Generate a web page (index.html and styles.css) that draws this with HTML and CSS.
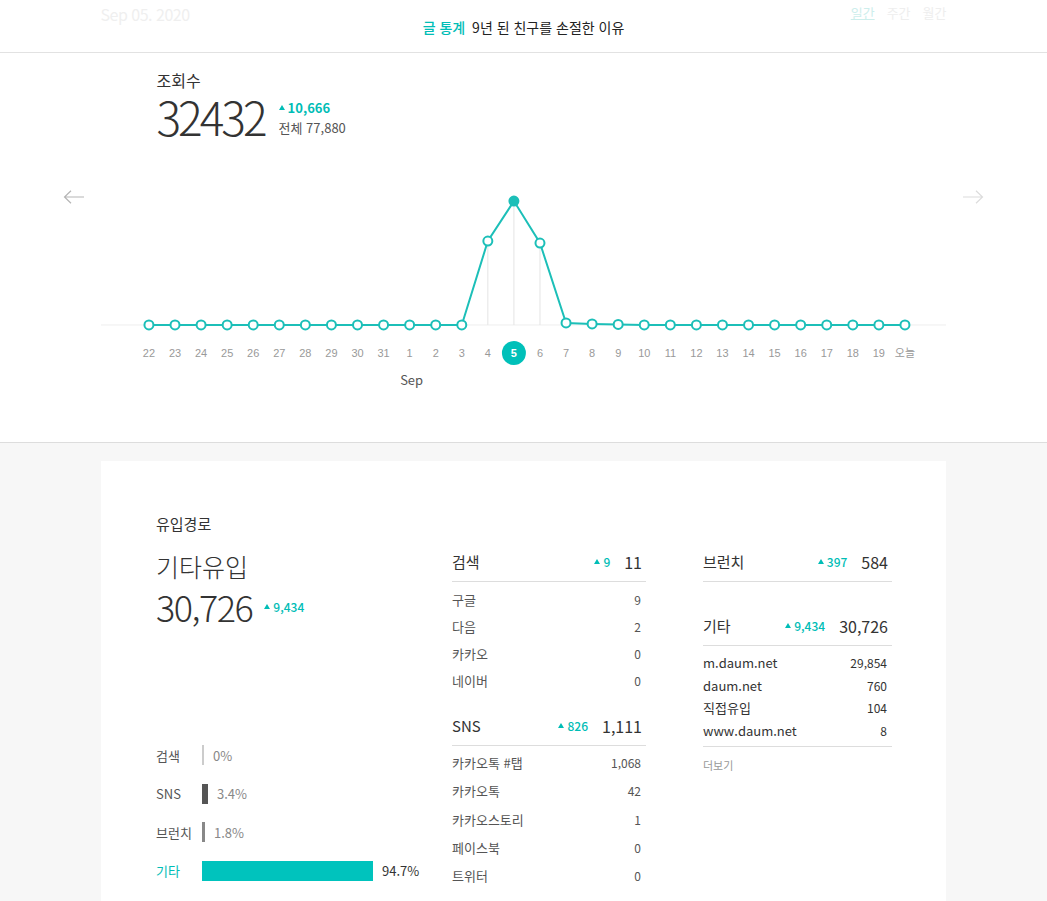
FILE: index.html
```html
<!DOCTYPE html>
<html lang="ko">
<head>
    <meta charset="utf-8">
    <title>글 통계</title>
    <link rel="stylesheet" href="styles.css">
</head>
<body>
    <header class="top-bar">
        <div class="wrap top-bar-inner">
            <span class="top-date">Sep 05. 2020</span>
            <h1 class="top-title"><em>글 통계</em> 9년 된 친구를 손절한 이유</h1>
            <ul class="period-tabs">
                <li class="active">일간</li>
                <li>주간</li>
                <li>월간</li>
            </ul>
        </div>
    </header>

    <section class="views">
        <div class="wrap">
            <div class="views-summary">
                <h2 class="views-label">조회수</h2>
                <div class="views-row">
                    <strong class="views-count">32432</strong>
                    <div class="views-meta">
                        <span class="delta">10,666</span>
                        <span class="views-total">전체 77,880</span>
                    </div>
                </div>
            </div>
        </div>

        <div class="chart-row">
            <button class="arrow" type="button" aria-label="이전">
                <svg width="22" height="14" viewBox="0 0 22 14"><path d="M21 7H1.5M8 0.8L1.5 7L8 13.2" fill="none" stroke="#b5b5b5" stroke-width="1.2"/></svg>
            </button>

            <svg class="chart" width="846" height="240" viewBox="0 0 846 240">
                <line x1="0" y1="165" x2="846" y2="165" stroke="#eeeeee"/>
                <!-- guide lines under the peak -->
                <line x1="387.3" y1="81" x2="387.3" y2="165" stroke="#e4e4e4"/>
                <line x1="413.4" y1="41" x2="413.4" y2="165" stroke="#e4e4e4"/>
                <line x1="439.5" y1="83" x2="439.5" y2="165" stroke="#e4e4e4"/>

                <polyline fill="none" stroke="#1cbfb8" stroke-width="2"
                    points="48,165 74.1,165 100.2,165 126.3,165 152.4,165 178.5,165 204.6,165 230.7,165 256.8,165 282.9,165 309,165 335.1,165 361.2,165 387.3,81 413.4,41 439.5,83 465.6,163 491.7,164 517.8,164.5 543.9,165 570,165 596.1,165 622.2,165 648.3,165 674.4,165 700.5,165 726.6,165 752.7,165 778.8,165 804.9,165"/>

                <g fill="#fff" stroke="#1cbfb8" stroke-width="2">
                    <circle cx="48" cy="165" r="4.5"/>
                    <circle cx="74.1" cy="165" r="4.5"/>
                    <circle cx="100.2" cy="165" r="4.5"/>
                    <circle cx="126.3" cy="165" r="4.5"/>
                    <circle cx="152.4" cy="165" r="4.5"/>
                    <circle cx="178.5" cy="165" r="4.5"/>
                    <circle cx="204.6" cy="165" r="4.5"/>
                    <circle cx="230.7" cy="165" r="4.5"/>
                    <circle cx="256.8" cy="165" r="4.5"/>
                    <circle cx="282.9" cy="165" r="4.5"/>
                    <circle cx="309" cy="165" r="4.5"/>
                    <circle cx="335.1" cy="165" r="4.5"/>
                    <circle cx="361.2" cy="165" r="4.5"/>
                    <circle cx="387.3" cy="81" r="4.5"/>
                    <circle cx="413.4" cy="41" r="4.5" fill="#1cbfb8"/>
                    <circle cx="439.5" cy="83" r="4.5"/>
                    <circle cx="465.6" cy="163" r="4.5"/>
                    <circle cx="491.7" cy="164" r="4.5"/>
                    <circle cx="517.8" cy="164.5" r="4.5"/>
                    <circle cx="543.9" cy="165" r="4.5"/>
                    <circle cx="570" cy="165" r="4.5"/>
                    <circle cx="596.1" cy="165" r="4.5"/>
                    <circle cx="622.2" cy="165" r="4.5"/>
                    <circle cx="648.3" cy="165" r="4.5"/>
                    <circle cx="674.4" cy="165" r="4.5"/>
                    <circle cx="700.5" cy="165" r="4.5"/>
                    <circle cx="726.6" cy="165" r="4.5"/>
                    <circle cx="752.7" cy="165" r="4.5"/>
                    <circle cx="778.8" cy="165" r="4.5"/>
                    <circle cx="804.9" cy="165" r="4.5"/>
                </g>

                <circle cx="413.4" cy="193" r="12" fill="#00c0b9"/>
                <g class="chart-days" text-anchor="middle">
                    <text x="48" y="197">22</text>
                    <text x="74.1" y="197">23</text>
                    <text x="100.2" y="197">24</text>
                    <text x="126.3" y="197">25</text>
                    <text x="152.4" y="197">26</text>
                    <text x="178.5" y="197">27</text>
                    <text x="204.6" y="197">28</text>
                    <text x="230.7" y="197">29</text>
                    <text x="256.8" y="197">30</text>
                    <text x="282.9" y="197">31</text>
                    <text x="309" y="197">1</text>
                    <text x="335.1" y="197">2</text>
                    <text x="361.2" y="197">3</text>
                    <text x="387.3" y="197">4</text>
                    <text x="413.4" y="197" class="today-pick">5</text>
                    <text x="439.5" y="197">6</text>
                    <text x="465.6" y="197">7</text>
                    <text x="491.7" y="197">8</text>
                    <text x="517.8" y="197">9</text>
                    <text x="543.9" y="197">10</text>
                    <text x="570" y="197">11</text>
                    <text x="596.1" y="197">12</text>
                    <text x="622.2" y="197">13</text>
                    <text x="648.3" y="197">14</text>
                    <text x="674.4" y="197">15</text>
                    <text x="700.5" y="197">16</text>
                    <text x="726.6" y="197">17</text>
                    <text x="752.7" y="197">18</text>
                    <text x="778.8" y="197">19</text>
                    <text x="804.9" y="197" class="today">오늘</text>
                </g>
                <text class="chart-month" x="311" y="225" text-anchor="middle">Sep</text>
            </svg>

            <button class="arrow" type="button" aria-label="다음">
                <svg width="22" height="14" viewBox="0 0 22 14"><path d="M1 7H20.5M14 0.8L20.5 7L14 13.2" fill="none" stroke="#dcdcdc" stroke-width="1.2"/></svg>
            </button>
        </div>
    </section>

    <section class="stats">
        <div class="card">
            <h2 class="card-title">유입경로</h2>
            <div class="card-body">
                <div class="col-main">
                    <div class="main-name">기타유입</div>
                    <div class="main-row">
                        <span class="main-count">30,726</span>
                        <span class="delta delta-sm">9,434</span>
                    </div>
                    <ul class="share-bars">
                        <li><span class="share-label">검색</span><i class="bar bar-search" style="width: 2px"></i><span class="share-value">0%</span></li>
                        <li><span class="share-label">SNS</span><i class="bar bar-sns" style="width: 6px"></i><span class="share-value">3.4%</span></li>
                        <li><span class="share-label">브런치</span><i class="bar bar-brunch" style="width: 3px"></i><span class="share-value">1.8%</span></li>
                        <li class="selected"><span class="share-label">기타</span><i class="bar bar-etc" style="width: 171px"></i><span class="share-value">94.7%</span></li>
                    </ul>
                </div>

                <div class="col-list">
                    <div class="group">
                        <div class="group-head">
                            <span class="group-name">검색</span>
                            <span class="delta delta-sm">9</span>
                            <span class="group-total">11</span>
                        </div>
                        <ul class="group-rows">
                            <li><span>구글</span><span>9</span></li>
                            <li><span>다음</span><span>2</span></li>
                            <li><span>카카오</span><span>0</span></li>
                            <li><span>네이버</span><span>0</span></li>
                        </ul>
                    </div>
                    <div class="group group-sns">
                        <div class="group-head">
                            <span class="group-name">SNS</span>
                            <span class="delta delta-sm">826</span>
                            <span class="group-total">1,111</span>
                        </div>
                        <ul class="group-rows">
                            <li><span>카카오톡 #탭</span><span>1,068</span></li>
                            <li><span>카카오톡</span><span>42</span></li>
                            <li><span>카카오스토리</span><span>1</span></li>
                            <li><span>페이스북</span><span>0</span></li>
                            <li><span>트위터</span><span>0</span></li>
                        </ul>
                    </div>
                </div>

                <div class="col-list col-right">
                    <div class="group">
                        <div class="group-head">
                            <span class="group-name">브런치</span>
                            <span class="delta delta-sm">397</span>
                            <span class="group-total">584</span>
                        </div>
                    </div>
                    <div class="group group-etc">
                        <div class="group-head">
                            <span class="group-name">기타</span>
                            <span class="delta delta-sm">9,434</span>
                            <span class="group-total">30,726</span>
                        </div>
                        <ul class="group-rows">
                            <li><span>m.daum.net</span><span>29,854</span></li>
                            <li><span>daum.net</span><span>760</span></li>
                            <li><span>직접유입</span><span>104</span></li>
                            <li><span>www.daum.net</span><span>8</span></li>
                        </ul>
                        <a class="more" href="#">더보기</a>
                    </div>
                </div>
            </div>
        </div>
    </section>
</body>
</html>
```

FILE: styles.css
```css
body {
    margin: 0;
    font-family: "Noto Sans CJK KR", "Noto Sans", sans-serif;
    color: #333;
    background-color: #fff;
}

ul {
    list-style: none;
    margin: 0;
    padding: 0;
}

.wrap {
    width: 846px;
    margin: 0 auto;
}

/* top bar */
.top-bar {
    height: 52px;
    border-bottom: 1px solid #e2e2e2;
}

.top-bar-inner {
    display: grid;
    grid-template-columns: 1fr auto 1fr;
    height: 52px;
}

.top-date {
    padding-top: 2px;
    font-size: 16px;
    color: #efefef;
    letter-spacing: -0.5px;
}

.top-title {
    margin: 0;
    padding-top: 17px;
    font-size: 14px;
    font-weight: 400;
    line-height: 20px;
    color: #222;
}

.top-title em {
    margin-right: 3px;
    font-style: normal;
    font-weight: 500;
    color: #00bdb6;
}

.period-tabs {
    justify-self: end;
    display: flex;
    gap: 12px;
    padding-top: 3px;
    font-size: 13px;
    color: #eeeeee;
}

.period-tabs .active {
    color: #cdeeec;
    text-decoration: underline;
}

/* views + chart */
.views {
    padding: 16px 0 42px;
    border-bottom: 1px solid #dddddd;
}

.views-summary {
    padding-left: 56px;
}

.views-label {
    margin: 0;
    font-size: 16px;
    font-weight: 400;
    line-height: 22px;
}

.views-row {
    display: flex;
    align-items: center;
    gap: 14px;
    margin-top: 2px;
}

.views-count {
    font-size: 46px;
    font-weight: 300;
    line-height: 46px;
    letter-spacing: -3px;
}

.views-meta {
    display: flex;
    flex-direction: column;
    padding-top: 4px;
    font-size: 13px;
    line-height: 20px;
}

.views-total {
    color: #555;
}

.delta {
    color: #00bdb6;
    font-weight: 700;
}

.delta::before {
    content: "";
    display: inline-block;
    margin-right: 3px;
    vertical-align: 3px;
    border-left: 3px solid transparent;
    border-right: 3px solid transparent;
    border-bottom: 5px solid currentColor;
}

.delta-sm {
    font-size: 12px;
    font-weight: 500;
}

.chart-row {
    display: flex;
    align-items: flex-start;
    width: 921px;
    margin: 21px auto 0;
}

.arrow {
    margin-top: 30px;
    padding: 0;
    border: none;
    background: none;
    line-height: 0;
    cursor: pointer;
}

.chart {
    display: block;
    margin: 0 16px 0 16px;
}

.chart-days text {
    font-family: "Liberation Sans", Arial, sans-serif;
    font-size: 11px;
    fill: #999;
}

.chart-days .today-pick {
    fill: #fff;
    font-weight: 700;
}

.chart-days .today {
    font-family: "Noto Sans CJK KR", sans-serif;
}

.chart-month {
    font-size: 13px;
    fill: #555;
}

/* inflow card */
.stats {
    padding-top: 18px;
    background-color: #f7f7f7;
}

.card {
    width: 845px;
    margin: 0 auto;
    padding: 52px 54px 20px 55px;
    box-sizing: border-box;
    background-color: #fff;
}

.card-title {
    margin: 0;
    font-size: 15px;
    font-weight: 400;
    line-height: 22px;
}

.card-body {
    display: flex;
    margin-top: 16px;
}

.col-main {
    width: 296px;
}

.main-name {
    font-size: 25px;
    font-weight: 300;
    line-height: 30px;
}

.main-row {
    display: flex;
    align-items: center;
    gap: 12px;
    margin-top: 5px;
}

.main-count {
    font-size: 36px;
    font-weight: 300;
    line-height: 40px;
    letter-spacing: -1.5px;
}

.share-bars {
    display: flex;
    flex-direction: column;
    gap: 18.5px;
    margin-top: 119px;
}

.share-bars li {
    display: flex;
    align-items: center;
    height: 20px;
    font-size: 13px;
}

.share-label {
    width: 46px;
    color: #555;
}

.bar {
    height: 20px;
    margin-right: 9px;
}

.bar-search { background-color: #cccccc; }
.bar-sns { background-color: #555555; }
.bar-brunch { background-color: #888888; }
.bar-etc { background-color: #00c3bd; }

.share-value {
    color: #888;
}

.share-bars .selected .share-label {
    color: #00bdb6;
}

.share-bars .selected .share-value {
    color: #333;
}

.col-list {
    width: 194px;
}

.col-right {
    width: 189px;
    margin-left: 57px;
}

.group-head {
    display: flex;
    align-items: center;
    gap: 14px;
    padding-bottom: 8px;
    border-bottom: 1px solid #dddddd;
    line-height: 22px;
}

.group-name {
    flex: 1;
    font-size: 15px;
}

.group-total {
    padding-right: 4px;
    font-size: 16px;
}

.group-rows {
    padding-top: 4px;
}

.group-rows li {
    display: flex;
    justify-content: space-between;
    padding-right: 5px;
    font-size: 13px;
    line-height: 27px;
    color: #555;
}

.group-rows li span:last-child {
    font-size: 12px;
}

.group-sns {
    margin-top: 21px;
}

.group-sns .group-rows {
    padding-top: 3px;
}

.group-sns .group-rows li {
    line-height: 28.3px;
}

.group-etc {
    margin-top: 33px;
}

.group-etc .group-rows {
    padding: 6px 0 4px;
    border-bottom: 1px solid #dddddd;
}

.group-etc .group-rows li {
    line-height: 22.6px;
    color: #333;
}

.more {
    display: block;
    margin-top: 10px;
    font-size: 11px;
    line-height: 16px;
    color: #999;
    text-decoration: none;
}
```
